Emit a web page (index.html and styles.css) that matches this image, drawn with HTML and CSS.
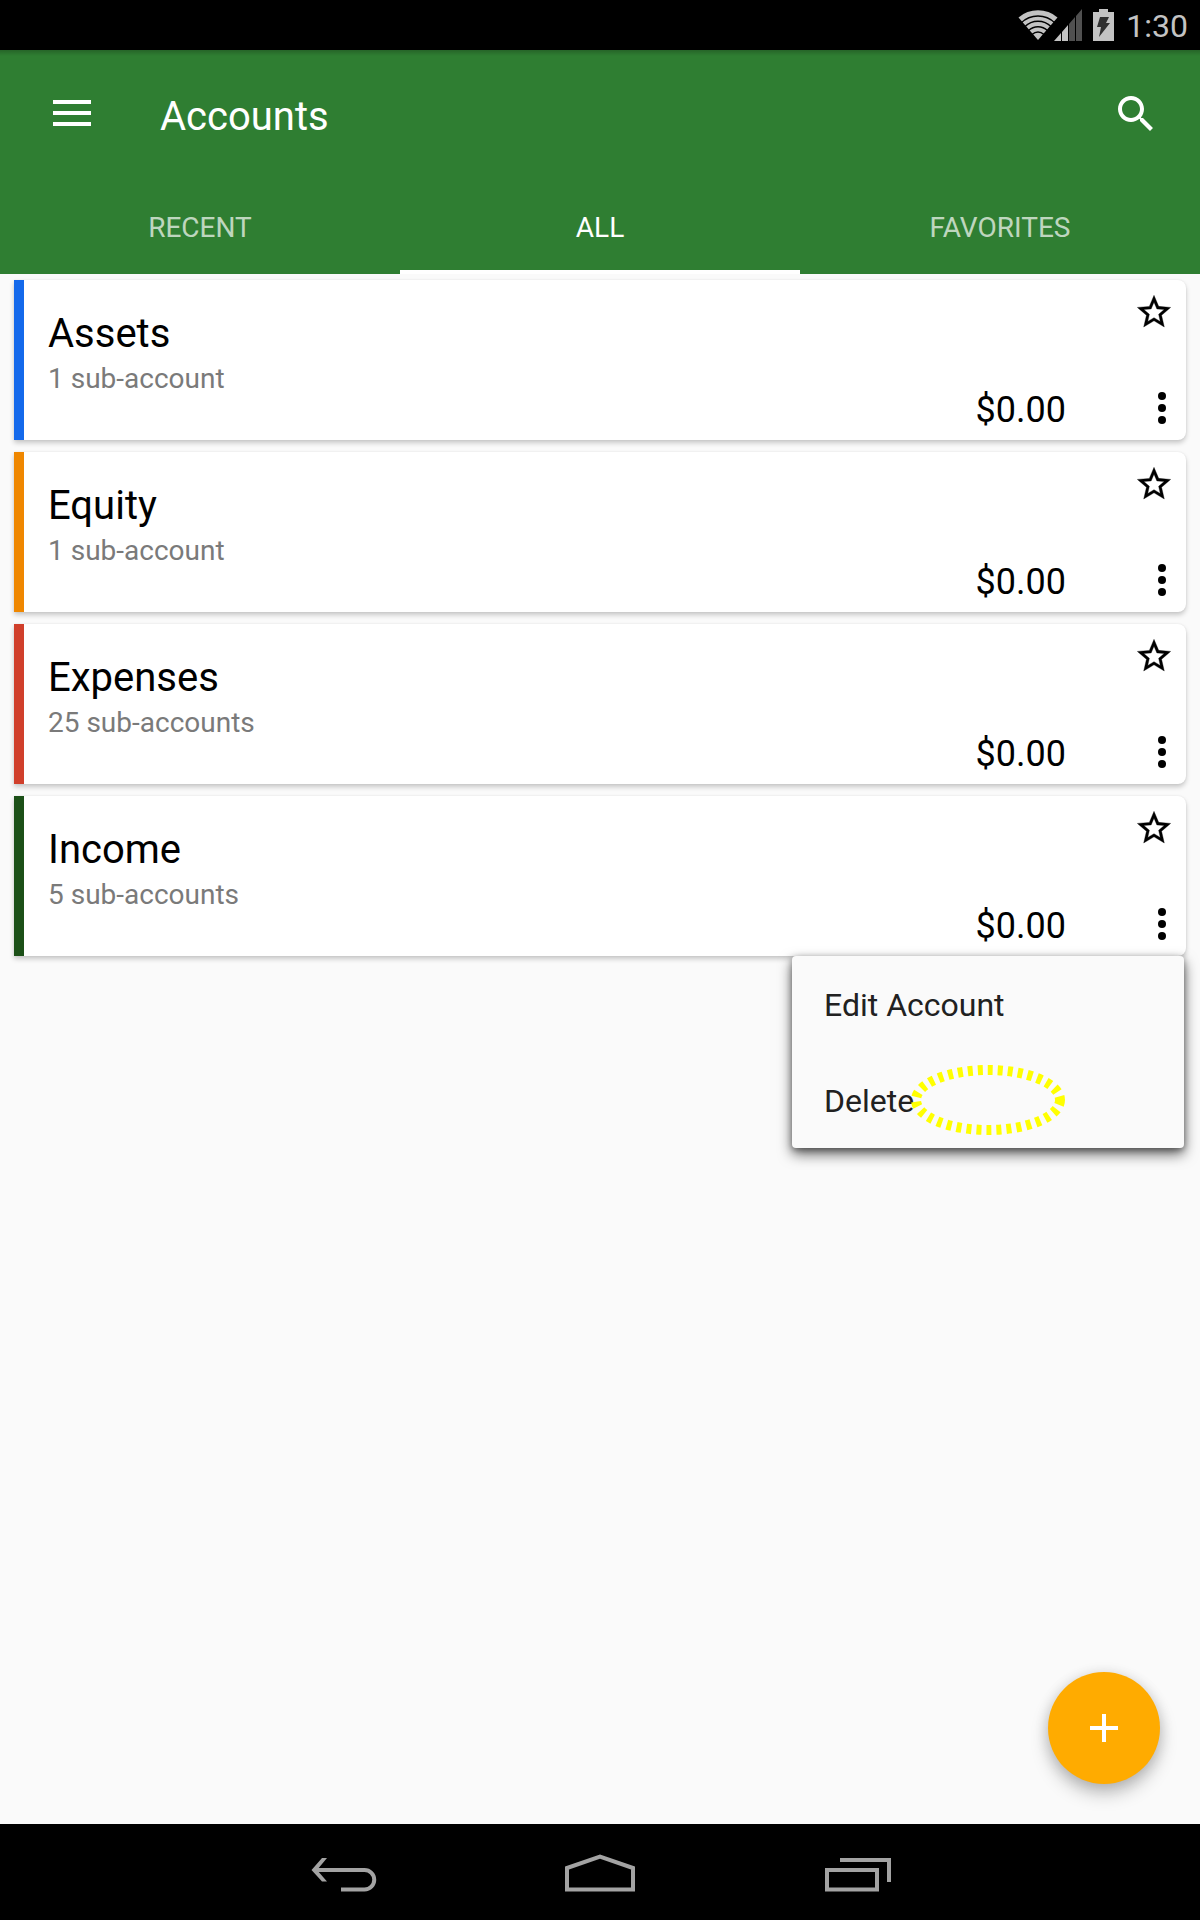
FILE: index.html
```html
<!DOCTYPE html>
<html lang="en">
<head>
<meta charset="utf-8">
<meta name="viewport" content="width=device-width, initial-scale=1">
<title>Accounts</title>
<link rel="stylesheet" href="styles.css">
</head>
<body>
<svg class="sprite" aria-hidden="true">
  <symbol id="star" viewBox="0 0 24 24"><path stroke="#000" stroke-width=".2" d="M22 9.24l-7.19-.62L12 2 9.19 8.63 2 9.24l5.46 4.73L5.82 21 12 17.27 18.18 21l-1.63-7.03L22 9.24zM12 15.4l-3.76 2.27 1-4.28-3.32-2.88 4.38-.38L12 6.1l1.71 4.04 4.38.38-3.32 2.88 1 4.28L12 15.4z"/></symbol>
  <symbol id="more" viewBox="0 0 48 48"><circle cx="24" cy="12" r="4"/><circle cx="24" cy="24" r="4"/><circle cx="24" cy="36" r="4"/></symbol>
</svg>

<div class="status">
  <svg class="wifi" width="40" height="32" viewBox="0 0 40 32" aria-hidden="true">
    <path fill="#c3c3c3" d="M20 31L.5 8.500A29.700 29.700 0 0 1 39.500 8.500z"/>
    <g fill="none" stroke="#000" stroke-width="1.400"><circle cx="20" cy="31" r="24"/><circle cx="20" cy="31" r="18.700"/><circle cx="20" cy="31" r="13.300"/><circle cx="20" cy="31" r="8"/></g>
  </svg>
  <svg class="signal" width="28" height="32" viewBox="0 0 28 32" aria-hidden="true">
    <path fill="#c3c3c3" d="M0 32L7 24V32zM8 23L14 16V32H8z"/>
    <path fill="#505050" d="M15 15L21 8V32H15zM22 7L28 0V32H22z"/>
  </svg>
  <svg class="battery" width="21" height="32" viewBox="0 0 21 32" aria-hidden="true">
    <path fill="#c3c3c3" d="M6 0h9v3h6v29H0V3h6z"/>
    <path fill="#303030" d="M7 8h9l-3 6h4L6 28l2-10H4z"/>
  </svg>
  <time class="clock">1:30</time>
</div>

<header class="appbar">
  <div class="toolbar">
    <button class="icon-btn" type="button" aria-label="Open menu">
      <svg width="48" height="48" viewBox="0 0 48 48"><path d="M5 10h38v4H5zM5 21h38v4H5zM5 32h38v4H5z"/></svg>
    </button>
    <h1 class="title">Accounts</h1>
    <button class="icon-btn" type="button" aria-label="Search">
      <svg width="48" height="48" viewBox="0 0 24 24"><path d="M15.500 14h-.79l-.28-.27C15.410 12.590 16 11.110 16 9.500 16 5.910 13.090 3 9.500 3S3 5.910 3 9.500 5.910 16 9.500 16c1.610 0 3.090-.59 4.230-1.570l.27.28v.79l5 4.990L20.490 19l-4.990-5zm-6 0C7.010 14 5 11.990 5 9.500S7.010 5 9.500 5 14 7.010 14 9.500 11.990 14 9.500 14z"/></svg>
    </button>
  </div>
  <nav class="tabs" aria-label="Account lists">
    <button class="tab" type="button">RECENT</button>
    <button class="tab active" type="button" aria-current="page">ALL</button>
    <button class="tab" type="button">FAVORITES</button>
  </nav>
</header>

<main class="content">
  <ul class="accounts">
    <li class="card assets">
      <div class="info"><h2 class="name">Assets</h2><p class="sub">1 sub-account</p></div>
      <span class="amount">$0.00</span>
      <div class="actions">
        <button class="star" type="button" aria-label="Favorite Assets"><svg width="40" height="40"><use href="#star"/></svg></button>
        <button class="more" type="button" aria-label="Options for Assets"><svg width="48" height="48"><use href="#more"/></svg></button>
      </div>
    </li>
    <li class="card equity">
      <div class="info"><h2 class="name">Equity</h2><p class="sub">1 sub-account</p></div>
      <span class="amount">$0.00</span>
      <div class="actions">
        <button class="star" type="button" aria-label="Favorite Equity"><svg width="40" height="40"><use href="#star"/></svg></button>
        <button class="more" type="button" aria-label="Options for Equity"><svg width="48" height="48"><use href="#more"/></svg></button>
      </div>
    </li>
    <li class="card expenses">
      <div class="info"><h2 class="name">Expenses</h2><p class="sub">25 sub-accounts</p></div>
      <span class="amount">$0.00</span>
      <div class="actions">
        <button class="star" type="button" aria-label="Favorite Expenses"><svg width="40" height="40"><use href="#star"/></svg></button>
        <button class="more" type="button" aria-label="Options for Expenses"><svg width="48" height="48"><use href="#more"/></svg></button>
      </div>
    </li>
    <li class="card income">
      <div class="info"><h2 class="name">Income</h2><p class="sub">5 sub-accounts</p></div>
      <span class="amount">$0.00</span>
      <div class="actions">
        <button class="star" type="button" aria-label="Favorite Income"><svg width="40" height="40"><use href="#star"/></svg></button>
        <button class="more" type="button" aria-label="Options for Income" aria-expanded="true"><svg width="48" height="48"><use href="#more"/></svg></button>
      </div>
      <div class="menu">
        <button class="menu-item" type="button">Edit Account</button>
        <button class="menu-item" type="button">Delete</button>
        <svg class="highlight" width="156" height="72" viewBox="0 0 156 72" aria-hidden="true"><ellipse cx="78" cy="36" rx="72" ry="30" fill="none" stroke="#ff0" stroke-width="10" stroke-dasharray="5 5"/></svg>
      </div>
    </li>
  </ul>
  <button class="fab" type="button" aria-label="Add account">
    <svg width="28" height="28" viewBox="0 0 28 28"><path fill="#fff" d="M12 0h4v12h12v4H16v12h-4V16H0v-4h12z"/></svg>
  </button>
</main>

<nav class="navbar" aria-label="System">
  <button class="nav-btn" type="button" aria-label="Back">
    <svg width="72" height="48" viewBox="0 0 72 48"><path d="M8 22H56.500a9.500 9.500 0 0 1 0 19.500H33"/><path fill="#a3a3a3" stroke="none" d="M14 10h5L9 22l10 11.500h-5L3.500 22z"/></svg>
  </button>
  <button class="nav-btn" type="button" aria-label="Home">
    <svg width="72" height="48" viewBox="0 0 72 48"><path d="M3 41.500V20L36 8.500 69 20V41.500z"/></svg>
  </button>
  <button class="nav-btn" type="button" aria-label="Recent apps">
    <svg width="72" height="48" viewBox="0 0 72 48"><path d="M7 22H57V41.500H7zM20 12H69V34"/></svg>
  </button>
</nav>
</body>
</html>
```

FILE: styles.css
```css
* {
  box-sizing: border-box;
}

body {
  margin: 0;
  min-height: 100vh;
  display: flex;
  flex-direction: column;
  background: #fafafa;
  color: #000;
  font-family: Roboto, "Noto Sans", sans-serif;
}

button {
  margin: 0;
  padding: 0;
  border: 0;
  background: none;
  color: inherit;
  font: inherit;
  cursor: pointer;
}

svg {
  display: block;
  flex: none;
}

.sprite {
  position: absolute;
  width: 0;
  height: 0;
}

/* Status bar */
.status {
  height: 50px;
  padding-right: 12px;
  display: flex;
  align-items: center;
  justify-content: flex-end;
  background: #000;
  color: #c3c3c3;
}

.signal {
  margin-right: 11px;
  margin-left: -4px;
}

.battery {
  margin-right: 12px;
}

.clock {
  padding-top: 2px;
  font-size: 32px;
  line-height: 38px;
}

/* App bar */
.appbar {
  background: linear-gradient(rgba(0, 0, 0, 0.2), transparent 6px) #2f7e32;
  color: #fff;
}

.toolbar {
  height: 128px;
  padding: 0 40px 0 48px;
  display: flex;
  align-items: center;
  gap: 64px;
}

.icon-btn {
  width: 48px;
  height: 48px;
  fill: #fff;
}

.title {
  flex: 1;
  margin: 0;
  padding-top: 6px;
  font-size: 40px;
  font-weight: 400;
  line-height: 48px;
}

.tabs {
  display: grid;
  grid-template-columns: repeat(3, 1fr);
}

.tab {
  height: 96px;
  padding-top: 8px;
  border-bottom: 4px solid transparent;
  color: rgba(255, 255, 255, 0.7);
  font-size: 28px;
  line-height: 32px;
}

.tab.active {
  border-color: #fff;
  color: #fff;
}

/* Account list */
.content {
  position: relative;
  flex: 1;
}

.accounts {
  margin: 0;
  padding: 6px 14px;
  display: grid;
  gap: 12px;
  list-style: none;
}

.card {
  position: relative;
  height: 160px;
  display: flex;
  border-left: 10px solid;
  border-radius: 0 8px 8px 0;
  background: #fff;
  box-shadow: 0 3px 5px rgba(0, 0, 0, 0.2), 0 0 2px rgba(0, 0, 0, 0.08);
}

.assets {
  border-color: #1469eb;
}

.equity {
  border-color: #ef8700;
}

.expenses {
  border-color: #d03f2b;
}

.income {
  border-color: #1c5018;
}

.info {
  flex: 1;
  padding: 30px 24px 0;
}

.name {
  margin: 0 0 5px;
  font-size: 40px;
  font-weight: 400;
  line-height: 48px;
}

.sub {
  margin: 0;
  color: #7a7a7a;
  font-size: 28px;
  line-height: 32px;
}

.amount {
  align-self: flex-end;
  padding-bottom: 10px;
  font-size: 36px;
  line-height: 40px;
}

.actions {
  width: 120px;
  padding: 12px 0 8px;
  display: flex;
  flex-direction: column;
  align-items: flex-end;
  justify-content: space-between;
}

.star {
  margin-right: 12px;
}

/* Options menu under the card */
.menu {
  position: absolute;
  z-index: 1;
  top: 100%;
  right: 2px;
  width: 392px;
  border-radius: 4px;
  background: #fafafa;
  box-shadow: 0 6px 14px rgba(0, 0, 0, 0.6), 0 2px 6px rgba(0, 0, 0, 0.35);
}

.menu-item {
  display: block;
  width: 100%;
  height: 96px;
  padding: 2px 32px 0;
  color: #212121;
  font-size: 32px;
  line-height: 38px;
  text-align: left;
}

.highlight {
  position: absolute;
  top: 108px;
  left: 118px;
}

.fab {
  position: absolute;
  right: 40px;
  bottom: 40px;
  width: 112px;
  height: 112px;
  display: flex;
  align-items: center;
  justify-content: center;
  border-radius: 50%;
  background: #ffab00;
  box-shadow: 0 10px 18px rgba(0, 0, 0, 0.22), 0 2px 14px rgba(0, 0, 0, 0.14);
}

/* System navigation */
.navbar {
  height: 96px;
  display: grid;
  grid-template-columns: repeat(3, 256px);
  justify-content: center;
  background: #000;
}

.nav-btn {
  display: flex;
  align-items: center;
  justify-content: center;
  fill: none;
  stroke: #a3a3a3;
  stroke-width: 4;
}
```
